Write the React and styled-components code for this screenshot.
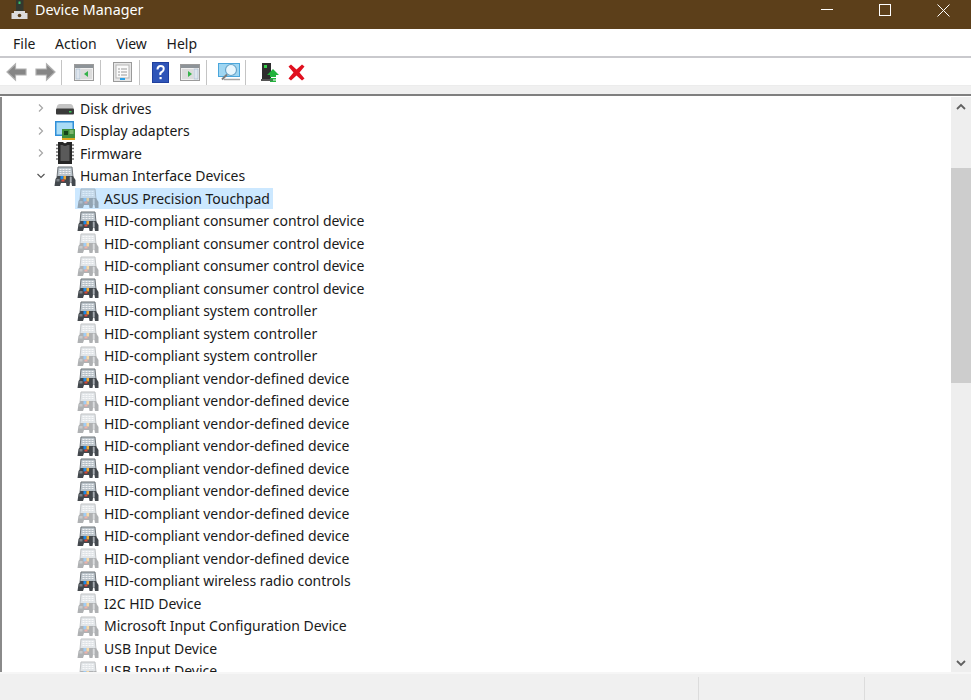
import React from "react";
import styled, { createGlobalStyle } from "styled-components";

const GlobalStyle = createGlobalStyle`
  html, body {
    margin: 0;
    padding: 0;
    background: #fff;
  }
`;

const Window = styled.div`
  width: 971px;
  height: 700px;
  display: flex;
  flex-direction: column;
  overflow: hidden;
  font-family: "Noto Sans", "Open Sans", sans-serif;
  color: #1a1a1a;
`;
const TitleBar = styled.div`
  height: 29px;
  flex: none;
  background: #5c3f1a;
  color: #fff;
  display: flex;
  align-items: flex-start;
  padding-left: 11px;
`;
const TitleText = styled.div`
  font-size: 14.3px;
  line-height: 20px;
  margin-left: 7px;
  flex: 1;
`;
const WinButtons = styled.div`
  height: 20px;
  display: flex;
  align-items: center;
  gap: 46px;
  padding-right: 21px;
`;
const MenuBar = styled.div`
  height: 27px;
  flex: none;
  display: flex;
  align-items: center;
  gap: 19.7px;
  padding-left: 13px;
  border-bottom: 2px solid #c9c9cd;
  font-size: 14px;
`;
const MenuItem = styled.span`
  line-height: 27px;
  padding-top: 2px;
`;
const ToolBar = styled.div`
  height: 28px;
  flex: none;
  display: flex;
  align-items: center;
  padding: 1px 0 0 6px;
  box-sizing: border-box;
  border-bottom: 1px solid #ececec;
`;
const ToolIcon = styled.svg`
  flex: none;
  display: block;
  margin-right: ${(p) => p.$gap || 0}px;
`;
const ToolSep = styled.div`
  width: 1px;
  height: 25px;
  flex: none;
  background: #c4c4c4;
  margin-right: ${(p) => p.$gap || 12}px;
`;
const Strip = styled.div`
  height: 8px;
  flex: none;
  background: #f0f0f0;
  border-bottom: 2px solid #7f7f7f;
`;
const Body = styled.div`
  flex: 1;
  min-height: 0;
  display: flex;
  border-left: 2px solid #8a8a8a;
  margin-top: 1px;
`;
const Tree = styled.div`
  flex: 1;
  min-width: 0;
  overflow: hidden;
`;
const Row = styled.div`
  height: 22.5px;
  display: flex;
  align-items: center;
  padding-left: ${(p) => p.$indent}px;
  font-size: 14px;
  white-space: nowrap;
`;
const Caret = styled.svg`
  width: 10px;
  height: 10px;
  flex: none;
  margin-right: 8px;
`;
const RowLabel = styled.div`
  display: flex;
  align-items: center;
  height: 21px;
  padding-right: 3px;
  background: ${(p) => (p.$selected ? "#cce8ff" : "transparent")};
`;
const DeviceIcon = styled.svg`
  width: 22px;
  height: 22px;
  flex: none;
  margin-right: ${(p) => p.$gap}px;
  margin-left: ${(p) => p.$left || 0}px;
  opacity: ${(p) => (p.$dim ? 0.42 : 1)};
`;
const ScrollBar = styled.div`
  width: 20px;
  flex: none;
  background: #eeeeee;
  display: flex;
  flex-direction: column;
  align-items: center;
`;
const ScrollArrow = styled.svg`
  width: 10px;
  height: 8px;
  flex: none;
  margin: ${(p) => p.$margin};
`;
const ScrollThumb = styled.div`
  width: 100%;
  height: 215px;
  flex: none;
  background: #cdcdcd;
  margin-top: 57px;
`;
const ScrollSpace = styled.div`
  flex: 1;
`;
const StatusBar = styled.div`
  height: 26px;
  flex: none;
  background: #f0f0f0;
  border-top: 2px solid #f6f6f6;
  display: flex;
`;
const StatusCell = styled.div`
  width: ${(p) => p.$w}px;
  flex: ${(p) => (p.$w ? "none" : 1)};
  border-right: ${(p) => (p.$line ? "1px solid #dcdcdc" : "none")};
  margin-top: 3px;
`;

const HidIcon = ({ dim, gap, left }) => (
  <DeviceIcon viewBox="0 0 22 22" $dim={dim} $gap={gap} $left={left}>
    <path d="M4 2h14l1 10H3z" fill="#b9c2c9" stroke="#6f7479" strokeWidth="1" />
    <path d="M5.500 4.500h11M5.500 6.500h11M5.500 8.500h11" stroke="#f2f4f6" strokeWidth="1.100" strokeDasharray="2 1" />
    <path d="M0.500 21l1-7 2-3H19l2.500 4v6h-3.500l-.5-3h-1.500l-.5 3h-3l-.5-3H7l-1 3z" fill="#43484d" />
    <rect x="15.800" y="11.500" width="1.900" height="6.500" rx=".9" fill="#a9aeb3" />
    <rect x="6.500" y="11" width="3" height="3.500" fill="#1e88e5" />
    <rect x="9.500" y="11" width="2.500" height="3.500" fill="#f0a830" />
    <rect x="7.500" y="14.500" width="3" height="2" fill="#d8493a" />
    <rect x="2.500" y="14" width="3" height="2.500" fill="#7d8288" />
  </DeviceIcon>
);

const DiskIcon = () => (
  <DeviceIcon viewBox="0 0 22 22" $gap={4}>
    <path d="M2.500 11Q3 7 6 7h10q3 0 3.500 4v1h-17z" fill="#c4c4c4" />
    <rect x="2" y="11.500" width="18" height="6" rx="1" fill="#3a3a3a" />
    <rect x="15" y="14" width="2.500" height="1.500" fill="#3ecb5a" />
  </DeviceIcon>
);

const DisplayIcon = () => (
  <DeviceIcon viewBox="0 0 22 22" $gap={4}>
    <rect x="1" y="1" width="19" height="15" fill="#2f8fd8" />
    <rect x="2.500" y="2.500" width="16" height="12" fill="#a9dcf7" />
    <rect x="8" y="9" width="13" height="9" fill="#3f8f3c" />
    <rect x="10" y="11" width="4" height="4" fill="#15451b" />
    <path d="M8 18h13v2H8z" fill="#d9a520" />
    <path d="M15.500 11h4M15.500 13h4" stroke="#bde0a6" strokeWidth="1" />
  </DeviceIcon>
);

const ChipIcon = () => (
  <DeviceIcon viewBox="0 0 22 22" $gap={4}>
    <path d="M4 0h5q2 2.500 4 0h5v22H4z" fill="#262626" />
    <path d="M6.500 3h2q2.500 2 5 0h2v16h-9z" fill="#5a5a5a" />
    <path d="M2 3h2M2 6.500h2M2 10h2M2 13.500h2M2 17h2M18 3h2M18 6.500h2M18 10h2M18 13.500h2M18 17h2" stroke="#777" strokeWidth="1.300" />
  </DeviceIcon>
);

const collapsed = [
  { name: "Disk drives", icon: <DiskIcon /> },
  { name: "Display adapters", icon: <DisplayIcon /> },
  { name: "Firmware", icon: <ChipIcon /> },
];

const devices = [
  { name: "ASUS Precision Touchpad", dim: true, selected: true },
  { name: "HID-compliant consumer control device" },
  { name: "HID-compliant consumer control device", dim: true },
  { name: "HID-compliant consumer control device", dim: true },
  { name: "HID-compliant consumer control device" },
  { name: "HID-compliant system controller" },
  { name: "HID-compliant system controller", dim: true },
  { name: "HID-compliant system controller", dim: true },
  { name: "HID-compliant vendor-defined device" },
  { name: "HID-compliant vendor-defined device", dim: true },
  { name: "HID-compliant vendor-defined device", dim: true },
  { name: "HID-compliant vendor-defined device" },
  { name: "HID-compliant vendor-defined device" },
  { name: "HID-compliant vendor-defined device" },
  { name: "HID-compliant vendor-defined device", dim: true },
  { name: "HID-compliant vendor-defined device" },
  { name: "HID-compliant vendor-defined device", dim: true },
  { name: "HID-compliant wireless radio controls" },
  { name: "I2C HID Device", dim: true },
  { name: "Microsoft Input Configuration Device", dim: true },
  { name: "USB Input Device", dim: true },
  { name: "USB Input Device", dim: true },
];

const AppIcon = () => (
  <svg width="17" height="20" viewBox="0 0 17 20" style={{ flex: "none" }}>
    <rect x="5" y="0" width="7.500" height="11" fill="#33382f" />
    <rect x="7.500" y="1.500" width="2" height="2.500" fill="#35c46a" />
    <path d="M3 11h11v2h2.500v6H.5v-6H3z" fill="#dcdcdc" />
    <circle cx="8.500" cy="15.500" r="1.800" fill="#5c3f1a" />
  </svg>
);

const Arrow = ({ flip, gap }) => (
  <ToolIcon width="21" height="20" viewBox="0 0 21 20" $gap={gap}>
    <g transform={flip ? "translate(21,0) scale(-1,1)" : undefined}>
      <path d="M1 10l8.500-8v5H20v6H9.500v5z" fill="#868686" stroke="#b0b0b0" strokeWidth="1.200" />
    </g>
  </ToolIcon>
);

const PaneIcon = ({ gap, mirrored }) => (
  <ToolIcon width="20" height="17" viewBox="0 0 20 17" $gap={gap}>
    <rect x=".5" y=".5" width="19" height="16" fill="#f0f0f0" stroke="#9b9b9b" />
    <rect x="1" y="1" width="18" height="3" fill="#8d9398" />
    <rect x={mirrored ? 14 : 2} y="5" width="4" height="10" fill="#dfe6ee" stroke="#9fb4c8" strokeWidth=".6" />
    <rect x={mirrored ? 2 : 7} y="5" width="11" height="10" fill="#dcdcdc" />
    <path d={mirrored ? "M8 7l4 3-4 3z" : "M14 7l-4 3 4 3z"} fill="#35b34a" />
  </ToolIcon>
);

export default function App() {
  return (
    <Window>
      <GlobalStyle />
      <TitleBar>
        <AppIcon />
        <TitleText>Device Manager</TitleText>
        <WinButtons>
          <svg width="12" height="12" viewBox="0 0 12 12">
            <path d="M0 5.500h12" stroke="#fff" />
          </svg>
          <svg width="12" height="12" viewBox="0 0 12 12">
            <rect x=".5" y=".5" width="11" height="11" fill="none" stroke="#fff" />
          </svg>
          <svg width="13" height="13" viewBox="0 0 13 13">
            <path d="M.5.5l12 12M12.500.5l-12 12" stroke="#fff" />
          </svg>
        </WinButtons>
      </TitleBar>
      <MenuBar>
        <MenuItem>File</MenuItem>
        <MenuItem>Action</MenuItem>
        <MenuItem>View</MenuItem>
        <MenuItem>Help</MenuItem>
      </MenuBar>
      <ToolBar>
        <Arrow gap={8} />
        <Arrow flip gap={5} />
        <ToolSep />
        <PaneIcon gap={6} />
        <ToolSep $gap={12} />
        <ToolIcon width="19" height="20" viewBox="0 0 19 20" $gap={7}>
          <rect x=".5" y=".5" width="18" height="19" fill="#e6e6e6" stroke="#9a9a9a" />
          <rect x="3" y="3" width="13" height="13" fill="#fafafa" stroke="#b5b5b5" />
          <path d="M5 7h2M8 7h6M5 10h2M8 10h6M5 13h2M8 13h6" stroke="#9a9a9a" />
          <rect x="7" y="16" width="5" height="2" fill="#2aa0e6" />
        </ToolIcon>
        <ToolSep $gap={12} />
        <ToolIcon width="17" height="21" viewBox="0 0 17 21" $gap={11}>
          <rect width="17" height="21" fill="#1f3f9e" />
          <rect x="1" y="1" width="15" height="19" fill="#2f55b8" />
          <path d="M5.500 7.500q0-3.500 3.200-3.500t3 3q0 2-2 3t-1.200 3" fill="none" stroke="#fff" strokeWidth="2" />
          <rect x="7.500" y="15" width="2.200" height="2.200" fill="#fff" />
        </ToolIcon>
        <PaneIcon gap={6} mirrored />
        <ToolSep $gap={11} />
        <ToolIcon width="22" height="20" viewBox="0 0 22 20" $gap={5}>
          <rect x="0" y="1" width="22" height="14" fill="#4aa6dc" />
          <rect x="1" y="2" width="20" height="12" fill="#9fd6f2" />
          <circle cx="13" cy="8" r="5.500" fill="#e8f6fd" stroke="#6aa4c8" strokeWidth="1.200" />
          <path d="M9 12.500l-5 5" stroke="#7d7d7d" strokeWidth="2" />
          <path d="M6 17.500h16" stroke="#a5a5a5" strokeWidth="1.500" />
        </ToolIcon>
        <ToolSep $gap={15} />
        <ToolIcon width="18" height="20" viewBox="0 0 18 20" $gap={9}>
          <rect x="1" y="1" width="9" height="16" fill="#2d2d2d" />
          <rect x="3" y="3" width="3" height="3" fill="#35d04a" />
          <rect y="17" width="12" height="2" fill="#555" />
          <path d="M12 7l6 6h-3v2H9v-2H6z" fill="#22b33c" />
          <path d="M9 16h6v1.500H9zM9 18.500h6V20H9z" fill="#22b33c" />
        </ToolIcon>
        <ToolIcon width="17" height="17" viewBox="0 0 17 17">
          <path d="M.5 2.500 3 .5l5.500 5 5.500-5 2.500 2-5 6 5 6-2.500 2-5.500-5-5.500 5-2.500-2 5-6z" fill="#e0101f" />
        </ToolIcon>
      </ToolBar>
      <Strip />
      <Body>
        <Tree>
          {collapsed.map((item) => (
            <Row key={item.name} $indent={34}>
              <Caret viewBox="0 0 10 10">
                <path d="M3 1.500 6.500 5 3 8.500" fill="none" stroke="#a6a6a6" strokeWidth="1.200" />
              </Caret>
              {item.icon}
              {item.name}
            </Row>
          ))}
          <Row $indent={34}>
            <Caret viewBox="0 0 10 10">
              <path d="M1.500 3 5 6.500 8.500 3" fill="none" stroke="#555" strokeWidth="1.200" />
            </Caret>
            <HidIcon gap={4} />
            Human Interface Devices
          </Row>
          {devices.map((d, i) => (
            <Row key={i} $indent={73}>
              <RowLabel $selected={d.selected}>
                <HidIcon dim={d.dim} gap={5} left={2} />
                {d.name}
              </RowLabel>
            </Row>
          ))}
        </Tree>
        <ScrollBar>
          <ScrollArrow viewBox="0 0 10 8" $margin="6px 0 0">
            <path d="M1 6l4-4 4 4" fill="none" stroke="#606060" strokeWidth="1.800" />
          </ScrollArrow>
          <ScrollThumb />
          <ScrollSpace />
          <ScrollArrow viewBox="0 0 10 8" $margin="0 0 5px">
            <path d="M1 2l4 4 4-4" fill="none" stroke="#606060" strokeWidth="1.800" />
          </ScrollArrow>
        </ScrollBar>
      </Body>
      <StatusBar>
        <StatusCell $w={698} $line />
        <StatusCell $w={165} $line />
        <StatusCell />
      </StatusBar>
    </Window>
  );
}
